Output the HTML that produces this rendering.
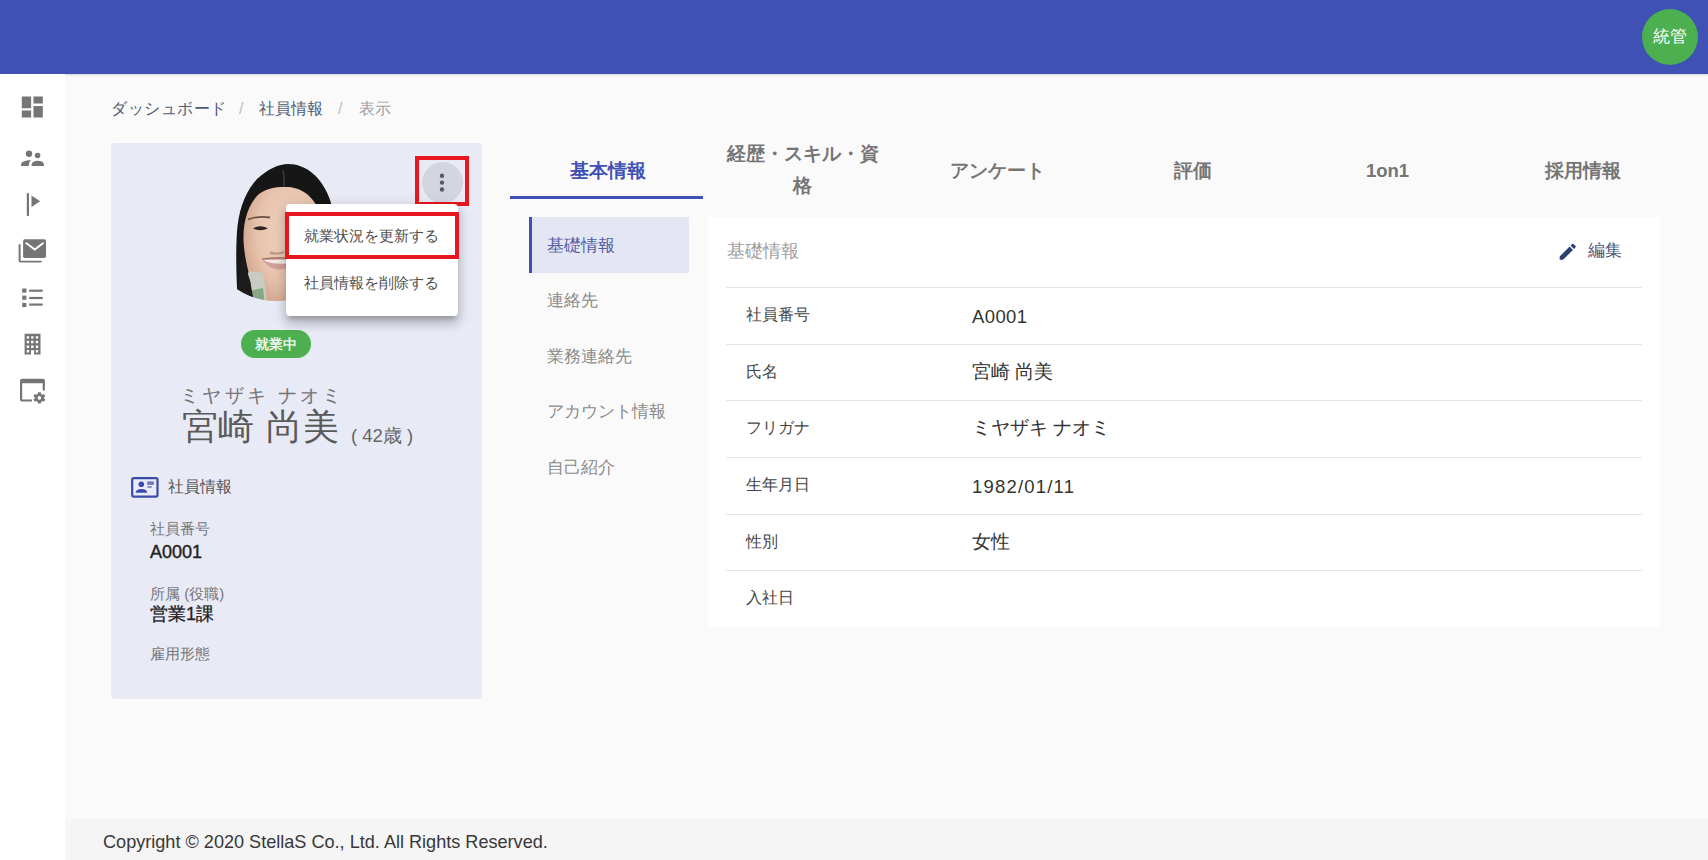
<!DOCTYPE html>
<html><head><meta charset="utf-8">
<style>
*{box-sizing:border-box;margin:0;padding:0}
html,body{width:1708px;height:860px;overflow:hidden;background:#fafafa;font-family:"Liberation Sans",sans-serif;color:#333}
.abs{position:absolute}
.t{position:absolute;white-space:nowrap}
#bar{left:0;top:0;width:1708px;height:74px;background:#3f51b5;box-shadow:0 1px 2px rgba(0,0,0,.15)}
#uav{left:1642px;top:9px;width:56px;height:56px;border-radius:50%;background:#4caf50;color:#fff;font-size:17px;line-height:56px;text-align:center}
#nav{left:0;top:74px;width:65px;height:786px;background:#fff}
#footer{left:65px;top:819px;width:1643px;height:41px;background:#f5f5f5}
#footer span{position:absolute;left:38px;top:13px;font-size:18.1px;color:#383838;white-space:nowrap}
.bc{top:97px;font-size:16.2px;line-height:22px}
#card{left:111px;top:143px;width:371px;height:556px;background:#e8eaf6;border-radius:3px;box-shadow:0 0 0 1.5px #fcfcfe}
.tab{top:143px;height:55px;width:195px;text-align:center;font-size:18.5px;font-weight:bold;color:#757575;line-height:55px}
.vt{left:547px;font-size:17.3px;color:#8a8a8a;line-height:22px}
#content{left:708px;top:217px;width:952px;height:410px;background:#fff}
.dv{left:726px;width:916px;height:1px;background:#e4e4e4}
.lb{left:746px;font-size:16px;color:#444;line-height:22px}
.va{left:972px;font-size:18.5px;color:#333;line-height:22px}
</style></head><body>
<div id="bar" class="abs"></div>
<div id="uav" class="abs">統管</div>
<div id="nav" class="abs"></div>

<svg class="abs" style="left:0;top:0" width="65" height="420" viewBox="0 0 65 420">
 <g fill="#757575">
  <!-- dashboard -->
  <path transform="translate(18.3,93.1) scale(1.1667)" d="M3 13h8V3H3v10zm0 8h8v-6H3v6zm10 0h8V11h-8v10zm0-18v6h8V3h-8z"/>
  <!-- people -->
  <circle cx="29" cy="153.7" r="3.2"/>
  <circle cx="37.6" cy="155.5" r="2.8"/>
  <path d="M21.1 166.1 L21.1 164 Q21.3 160.6 30.8 159.9 Q28.6 162.5 28.8 166.1 Z"/>
  <path d="M31.6 166.1 L31.6 164.5 Q32.5 160.8 37.8 160.8 Q43.3 160.8 44 164.5 L44 166.1 Z"/>
  <!-- flag -->
  <rect x="26.8" y="193.2" width="2.2" height="22.7"/>
  <path d="M31.5 195.6 L40.1 201.3 L31.5 207.1 Z"/>
  <!-- mail multiple -->
  <rect x="23.1" y="239.3" width="22.9" height="18.8" rx="1.8"/>
  <path d="M18.6 244.2 H20.6 V260.7 H41.6 V262.5 H20.3 Q18.6 262.5 18.6 260.8 Z"/>
  <!-- list -->
  <rect x="22.2" y="288.5" width="4.2" height="4.2"/>
  <rect x="22.2" y="295.6" width="4.2" height="4.2"/>
  <rect x="22.2" y="302.9" width="4.2" height="4.2"/>
  <rect x="29.2" y="289.6" width="13.5" height="2.2"/>
  <rect x="29.2" y="296.9" width="13.5" height="2.2"/>
  <rect x="29.2" y="303.5" width="13.5" height="2.2"/>
  <!-- building -->
  <path fill-rule="evenodd" d="M24.6 333.8 H40.5 V354.6 H34.1 V350.2 H31 V354.6 H24.6 Z
   M26.7 336.2 h2.4 v2.4 h-2.4z M31.1 336.2 h2.4 v2.4 h-2.4z M35.8 336.2 h2.4 v2.4 h-2.4z
   M26.7 340.8 h2.4 v2.4 h-2.4z M31.1 340.8 h2.4 v2.4 h-2.4z M35.8 340.8 h2.4 v2.4 h-2.4z
   M26.7 345.5 h2.4 v2.4 h-2.4z M31.1 345.5 h2.4 v2.4 h-2.4z M35.8 345.5 h2.4 v2.4 h-2.4z
   M26.7 350.1 h2.4 v2.4 h-2.4z M35.8 350.1 h2.4 v2.4 h-2.4z"/>
  <!-- app cog -->
  <path d="M22 378.8 H43 Q44.9 378.8 44.9 380.8 V390.6 H42.7 V383.3 H22.2 V399.4 H31.9 V401.6 H22 Q20 401.6 20 399.6 V380.8 Q20 378.8 22 378.8 Z"/>
  <g transform="translate(39.4,397.9)">
   <path fill-rule="evenodd" d="M-1.3 -5.6 H1.3 L1.7 -4 L3.2 -3.2 L4.7 -3.8 L5.9 -1.6 L4.6 -0.6 V0.6 L5.9 1.6 L4.7 3.8 L3.2 3.2 L1.7 4 L1.3 5.6 H-1.3 L-1.7 4 L-3.2 3.2 L-4.7 3.8 L-5.9 1.6 L-4.6 0.6 V-0.6 L-5.9 -1.6 L-4.7 -3.8 L-3.2 -3.2 L-1.7 -4 Z M0 -1.8 A1.8 1.8 0 1 0 0.01 -1.8 Z"/>
  </g>
 </g>
 <path d="M25.7 242.8 L34.8 249.5 L43.6 242.8" stroke="#fff" stroke-width="2" fill="none"/>
</svg>

<div id="footer" class="abs"><span>Copyright © 2020 StellaS Co., Ltd. All Rights Reserved.</span></div>

<div class="t bc" style="left:111px;color:#4f5b73;letter-spacing:0.55px">ダッシュボード</div>
<div class="t bc" style="left:239px;color:#bdbdbd">/</div>
<div class="t bc" style="left:259px;color:#4f5b73">社員情報</div>
<div class="t bc" style="left:338px;color:#bdbdbd">/</div>
<div class="t bc" style="left:359px;color:#9e9e9e">表示</div>

<!-- left card -->
<div id="card" class="abs"></div>
<svg class="abs" style="left:196px;top:151px" width="160" height="160" viewBox="196 151 160 160">
 <defs>
  <clipPath id="cp"><circle cx="276" cy="231" r="70"/></clipPath>
  <radialGradient id="skin" cx="0.6" cy="0.4" r="0.65"><stop offset="0" stop-color="#f0d3c2"/><stop offset="0.65" stop-color="#e8c4ae"/><stop offset="1" stop-color="#cfa48c"/></radialGradient>
  <filter id="bl" x="-10%" y="-10%" width="120%" height="120%"><feGaussianBlur stdDeviation="0.7"/></filter>
 </defs>
 <g clip-path="url(#cp)">
  <g filter="url(#bl)">
  <path d="M238 305 C236 275 235.5 245 237.5 226 C240 205 247 190 257 179 C268 169 279 164 288 164 C306 164 322 177 330 200 C335 215 336 240 336 305 Z" fill="#181616"/>
  <path d="M283 170 Q285 179 284 188" stroke="#3c3634" stroke-width="1.6" fill="none"/>
  <path d="M243.5 240 C243 222 248 204 259 194 C267 188 277 186.5 288 187 C305 188 318 200 322 222 L322 305 L262 305 C256 296 251 285 248.5 272 C246 262 244 252 243.5 240 Z" fill="url(#skin)"/>
  <path d="M246 305 C244 290 246 278 249 271 L263 273 C265 285 266 295 267 305 Z" fill="#c9ccc2"/>
  <path d="M249 291 L263 288 L265 305 L250 305 Z" fill="#86a882"/>
  <path d="M237 305 C238 282 240 265 243 250 C245 262 247 272 250.5 282 C251.5 290 253 297 255 305 Z" fill="#1c1a1a"/>
  <path d="M248 219.5 Q258 215.5 270 217.5" stroke="#6a5044" stroke-width="1.8" fill="none"/>
  <path d="M253 228.5 Q260 224 268 228.5 Q260 232 253 228.5 Z" fill="#2e2424"/>
  <path d="M270 252.5 Q277 255 284 252" stroke="#c09a84" stroke-width="2.4" fill="none"/>
  <path d="M262 259 Q273 257 286 258 L286 268.5 Q273 272 264 262 Z" fill="#d4a09c"/>
  <path d="M264 260 Q274 259.5 286 259.5 L286 263.5 Q275 264.5 266 261.5 Z" fill="#f2ebe6"/>
  <path d="M262 259 Q274 257.5 286 258" stroke="#9a6a62" stroke-width="1.2" fill="none"/>
  </g>
 </g>
</svg>
<div class="abs" style="left:241px;top:330px;width:70px;height:28px;border-radius:14px;background:#4caf50;color:#fff;font-size:14px;line-height:28px;text-align:center;-webkit-text-stroke:0.3px #fff">就業中</div>
<div class="t" style="left:180px;top:385px;font-size:18.5px;letter-spacing:3.3px;color:#757575;line-height:22px">ミヤザキ ナオミ</div>
<div class="t" style="left:181.5px;top:406px;font-size:36px;letter-spacing:0.8px;color:#5a5a5a;line-height:42px">宮崎 尚美</div>
<div class="t" style="left:351px;top:423.5px;font-size:18.5px;color:#666;line-height:24px">( 42歳 )</div>

<svg class="abs" style="left:130px;top:477px" width="30" height="22" viewBox="0 0 30 22">
 <rect x="2.2" y="1.2" width="25.3" height="18.4" rx="1.6" fill="#e9ebfb" stroke="#3b4ca8" stroke-width="2.2"/>
 <circle cx="11.3" cy="7.2" r="2.8" fill="#3b4ca8"/>
 <path d="M5.6 15.8 Q6 12.1 11.4 12.1 Q16.8 12.1 17.2 15.8 Z" fill="#3b4ca8"/>
 <rect x="17.2" y="4.4" width="6.7" height="3.5" fill="#6d7ac0"/>
 <rect x="17.2" y="9.2" width="4.5" height="1.5" fill="#6d7ac0"/>
</svg>
<div class="t" style="left:168px;top:476px;font-size:16px;color:#555;line-height:22px">社員情報</div>
<div class="t" style="left:150px;top:519px;font-size:15px;color:#777;line-height:20px">社員番号</div>
<div class="t" style="left:150px;top:541px;font-size:18px;color:#222;line-height:22px;-webkit-text-stroke:0.4px #222">A0001</div>
<div class="t" style="left:150px;top:584px;font-size:15px;color:#777;line-height:20px">所属 (役職)</div>
<div class="t" style="left:150px;top:603px;font-size:18px;color:#222;line-height:22px;-webkit-text-stroke:0.3px #222">営業1課</div>
<div class="t" style="left:150px;top:644px;font-size:15px;color:#777;line-height:20px">雇用形態</div>

<!-- kebab -->
<div class="abs" style="left:421.5px;top:161.5px;width:41px;height:41px;border-radius:50%;background:#d3d5e0"></div>
<svg class="abs" style="left:436px;top:170px" width="12" height="26" viewBox="0 0 12 26"><g fill="#5a5a5a"><circle cx="6" cy="5.7" r="2.2"/><circle cx="6" cy="12.6" r="2.2"/><circle cx="6" cy="19.5" r="2.2"/></g></svg>
<div class="abs" style="left:415.2px;top:156.1px;width:53.7px;height:50.4px;border:4.8px solid #e8161f"></div>

<!-- menu -->
<div class="abs" style="left:285.8px;top:203.6px;width:172.2px;height:112.6px;background:#fff;border-radius:4px;box-shadow:0 5px 5px -3px rgba(0,0,0,.2),0 8px 10px 1px rgba(0,0,0,.14),0 3px 14px 2px rgba(0,0,0,.12)"></div>
<div class="t" style="left:304px;top:225px;font-size:15px;color:#505050;line-height:22px">就業状況を更新する</div>
<div class="t" style="left:304px;top:272px;font-size:15px;color:#505050;line-height:22px">社員情報を削除する</div>
<div class="abs" style="left:285.2px;top:212.2px;width:173.6px;height:47.3px;border:4.8px solid #e8161f"></div>

<!-- tabs -->
<div class="t tab" style="left:510px;color:#3f51b5">基本情報</div>
<div class="t tab" style="left:705px;line-height:32px;white-space:normal;top:138px">経歴・スキル・資<br>格</div>
<div class="t tab" style="left:900px">アンケート</div>
<div class="t tab" style="left:1095px">評価</div>
<div class="t tab" style="left:1290px">1on1</div>
<div class="t tab" style="left:1485px">採用情報</div>
<div class="abs" style="left:510px;top:196px;width:193px;height:2.5px;background:#3f51b5"></div>

<!-- vertical tabs -->
<div class="abs" style="left:529px;top:217px;width:160px;height:56px;background:#e4e6f3;border-left:3px solid #3f51b5"></div>
<div class="t vt" style="top:234px;color:#5060a8">基礎情報</div>
<div class="t vt" style="top:289px">連絡先</div>
<div class="t vt" style="top:345px">業務連絡先</div>
<div class="t vt" style="top:400px">アカウント情報</div>
<div class="t vt" style="top:456px">自己紹介</div>

<!-- content -->
<div id="content" class="abs"></div>
<div class="t" style="left:727px;top:240px;font-size:18px;color:#9e9e9e;line-height:22px">基礎情報</div>
<svg class="abs" style="left:1556.5px;top:240.5px" width="21.5" height="21.5" viewBox="0 0 24 24"><path fill="#2d4170" d="M3 17.25V21h3.75L17.81 9.94l-3.75-3.75L3 17.25zM20.71 7.04c.39-.39.39-1.02 0-1.41l-2.34-2.34c-.39-.39-1.02-.39-1.41 0l-1.83 1.83 3.75 3.75 1.83-1.83z"/></svg>
<div class="t" style="left:1588px;top:240px;font-size:17px;color:#4a5a80;line-height:22px">編集</div>

<div class="abs dv" style="top:287px"></div>
<div class="abs dv" style="top:343.5px"></div>
<div class="abs dv" style="top:400px"></div>
<div class="abs dv" style="top:457px"></div>
<div class="abs dv" style="top:513.5px"></div>
<div class="abs dv" style="top:570px"></div>

<div class="t lb" style="top:304px">社員番号</div><div class="t va" style="top:305.5px;letter-spacing:0.4px">A0001</div>
<div class="t lb" style="top:360.5px">氏名</div><div class="t va" style="top:360.5px">宮崎 尚美</div>
<div class="t lb" style="top:417px">フリガナ</div><div class="t va" style="top:417px">ミヤザキ ナオミ</div>
<div class="t lb" style="top:474px">生年月日</div><div class="t va" style="top:475.5px;letter-spacing:1.2px">1982/01/11</div>
<div class="t lb" style="top:530.5px">性別</div><div class="t va" style="top:530.5px">女性</div>
<div class="t lb" style="top:587px">入社日</div>

</body></html>
